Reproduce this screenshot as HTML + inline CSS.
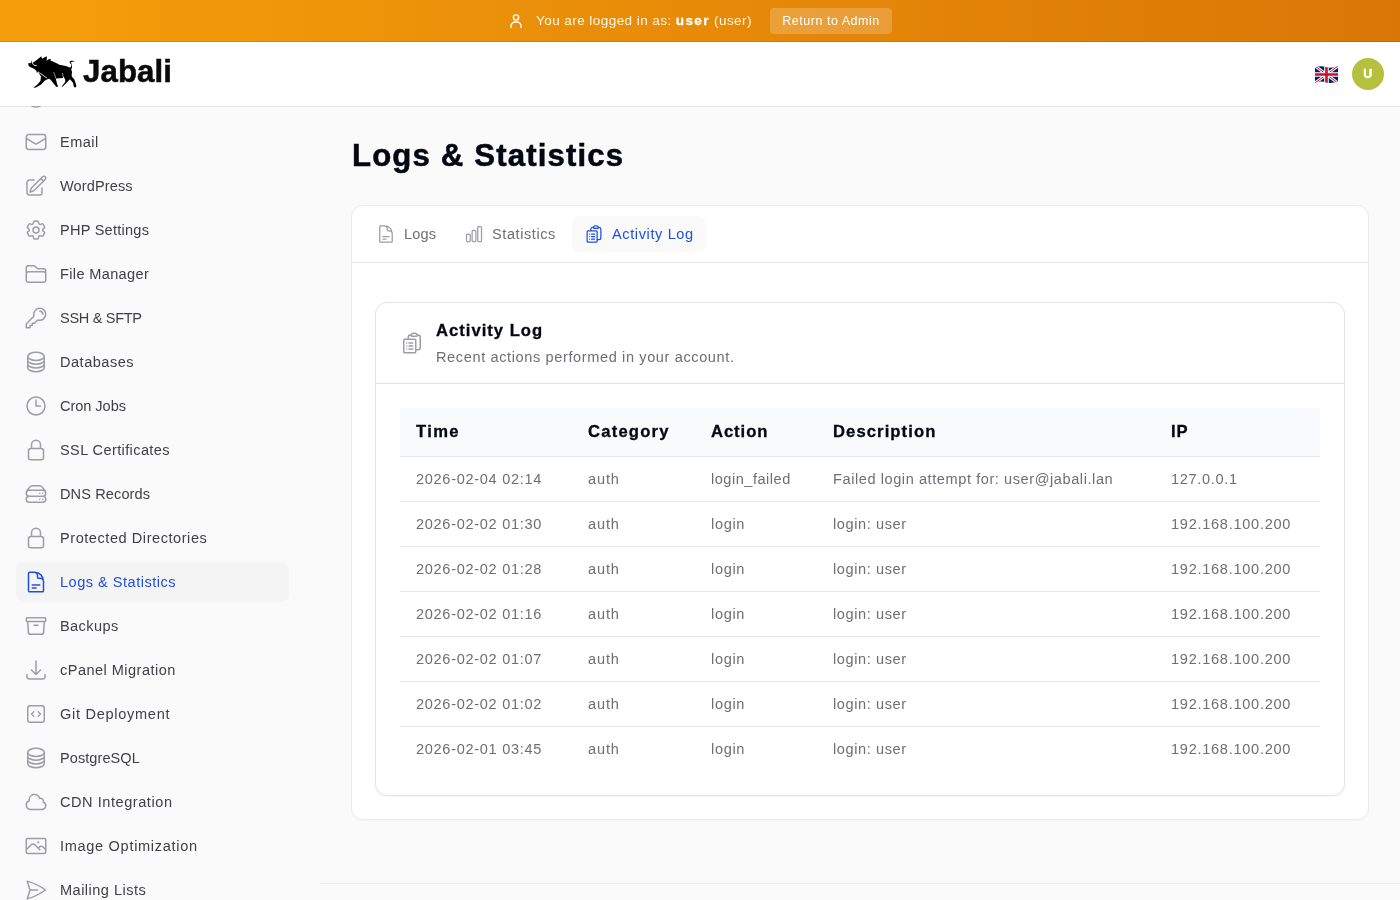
<!DOCTYPE html>
<html><head><meta charset="utf-8">
<style>
*{box-sizing:border-box;margin:0;padding:0}
html,body{width:1400px;height:900px;overflow:hidden;background:#fafafa;font-family:"Liberation Sans",sans-serif;color:#030712}
.banner{position:absolute;left:0;top:0;width:1400px;height:42px;background:linear-gradient(to right,#f59e0b,#d97706);border-bottom:1px solid rgba(120,30,0,.15)}
.banner .uicon{position:absolute;left:508px;top:12px;width:16px;height:18px}
.banner .msg{position:absolute;left:536px;top:12px;font-size:13.52px;line-height:17px;color:#fff7e6;white-space:nowrap}
.banner .msg b{color:#fff;font-weight:700}
.banner .btn{position:absolute;left:770px;top:8px;width:122px;height:26px;border-radius:4px;background:rgba(255,255,255,.2);color:#fff;font-size:12.48px;line-height:26px;text-align:center;white-space:nowrap}
.header{position:absolute;left:0;top:42px;width:1400px;height:65px;background:#fff;border-bottom:1px solid #e5e5e5;z-index:2}
.logo{position:absolute;left:24px;top:10px;width:60px;height:40px}
.brand{position:absolute;left:83px;top:10px;font-size:31.20px;line-height:40px;font-weight:700;color:#0a0a0a;letter-spacing:-0.75px;white-space:nowrap}
.flag{position:absolute;left:1315px;top:23.5px;width:23px;height:17px}
.avatar{position:absolute;left:1352px;top:16px;width:32px;height:32px;border-radius:50%;background:#b6c03f;color:#fff;font-size:12.48px;font-weight:700;line-height:32px;text-align:center}
.sidebar{position:absolute;left:0;top:106px;width:320px;height:794px;overflow:hidden;z-index:3}
.nav{position:absolute;left:16px;top:-28px;width:273px}
.item{position:relative;height:40px;margin-bottom:4px;border-radius:8px}
.item svg{position:absolute;left:8px;top:8px;width:24px;height:24px;fill:none;stroke:#9d9da7;stroke-width:1.5;stroke-linecap:round;stroke-linejoin:round}
.item span{position:absolute;left:44px;top:10px;font-size:14.56px;line-height:20px;color:#3f3f46;white-space:nowrap}
.item.active{background:#f4f4f5}
.item.active svg{stroke:#1f4fe0}
.item.active span{color:#1f4fe0}
.main{position:absolute;left:320px;top:107px;width:1080px;height:793px}
h1{position:absolute;left:32px;top:31px;font-size:31.20px;line-height:36px;font-weight:700;letter-spacing:-0.75px;color:#030712;white-space:nowrap}
.card{position:absolute;left:31px;top:98px;width:1018px;height:615px;background:#fff;border:1px solid #ececec;border-radius:12px;box-shadow:0 1px 2px rgba(0,0,0,.04)}
.tabs{position:absolute;left:0;top:0;width:1016px;height:57px;border-bottom:1px solid #e4e4e7}
.tab{position:absolute;top:10px;height:36px;border-radius:8px}
.tab svg{position:absolute;left:12px;top:8px;width:20px;height:20px;fill:none;stroke:#9d9da7;stroke-width:1.5;stroke-linecap:round;stroke-linejoin:round}
.tab span{position:absolute;left:40px;top:8px;font-size:14.56px;line-height:20px;color:#6e6e78;white-space:nowrap}
.tab.active{background:#fafafa}
.tab.active svg{stroke:#1f4fe0}
.tab.active span{color:#1f4fe0}
.inner{position:absolute;left:23px;top:96px;width:970px;height:494px;background:#fff;border:1px solid #e4e4e7;border-radius:12px;box-shadow:0 1px 2px rgba(0,0,0,.05)}
.ihead{position:absolute;left:0;top:0;width:968px;height:81px;border-bottom:1px solid #e4e4e7}
.ihead svg{position:absolute;left:24px;top:28px;width:24px;height:24px;fill:none;stroke:#9d9da7;stroke-width:1.5;stroke-linecap:round;stroke-linejoin:round}
.ihead h3{position:absolute;left:60px;top:16px;font-size:16.64px;line-height:24px;font-weight:700;color:#030712;white-space:nowrap}
.ihead p{position:absolute;left:60px;top:44px;font-size:14.56px;line-height:20px;color:#6e6e78;white-space:nowrap}
table{position:absolute;left:24px;top:105px;width:920px;border-collapse:collapse;table-layout:fixed}
th{height:48px;background:#f9fafb;border-bottom:1px solid #e5e7eb;text-align:left;padding:0 16px;font-size:16.64px;font-weight:700;color:#030712;white-space:nowrap}
td{height:45px;border-bottom:1px solid #e5e7eb;padding:0 16px;font-size:14.56px;color:#6e6e78;white-space:nowrap}
tr:last-child td{border-bottom:0}
.footline{position:absolute;left:0;top:776px;width:1080px;height:1px;background:#ececec}
h1{-webkit-text-stroke:0.5px #030712}
.brand{-webkit-text-stroke:0.5px #0a0a0a}
th,.ihead h3{-webkit-text-stroke:0.3px #030712}
.avatar{-webkit-text-stroke:0.4px #fff}
.banner .msg b{-webkit-text-stroke:0.3px #fff}
body *{-webkit-font-smoothing:antialiased}
.main,.sidebar,.banner,.header{will-change:transform}
</style></head><body>
<div class="banner">
 <svg class="uicon" viewBox="0 0 16 18" fill="none" stroke="#fff" stroke-width="1.4" stroke-linecap="round"><circle cx="8" cy="5.5" r="2.6"></circle><path d="M3 15.5v-1.3a4.2 4.2 0 0 1 4.2-4.2h1.6a4.2 4.2 0 0 1 4.2 4.2v1.3"></path></svg>
 <div class="msg" style="letter-spacing: 0.436px;">You are logged in as: <b style="letter-spacing: 1.348px;">user</b> (user)</div>
 <div class="btn" style="letter-spacing: 0.55px;">Return to Admin</div>
</div>
<div class="header">
 <svg class="logo" viewBox="24 52 60 40"><path fill="#000" d="M28.2,63.2 L31,63 L31.2,60 L32,63 L33.2,62.4 L36,60.5 L39.2,58 L41.2,56.2 L42,58.8 L43.2,58 L46.8,56.2 L46.8,59.6 L46.4,61 L48.4,59.2 L51.2,59.2 L50.4,60.4 L52.8,61.6 L57.2,63.6 L59.2,64.8 L66,66 L69.6,67.6 L70.8,67.2 L71.6,64.8 L70,63.2 L69.6,61.6 L72,60.4 L74.8,61.4 L72,61.8 L70.8,62.6 L72,64.8 L72,67.6 L71.2,69.6 L72,72 L71.6,75.2 L72,76.8 L74.4,79.6 L76,84.4 L76.4,86.4 L75.2,87.6 L73.9,86.9 L73.1,83 L71,80.6 L70,79.2 L68,81.2 L64.8,84.4 L62,87.2 L61.6,87.4 L62.4,85.6 L65.2,82 L65.2,79.6 L63.6,76.8 L62.8,78 L56,78.4 L56,79.6 L57.2,84.4 L58,86 L57.2,87.2 L56,86.4 L52.8,82.4 L50.4,79.6 L48.4,78.8 L44.6,80.8 L41.2,84.4 L36,87.6 L33.2,87.8 L37.2,84.8 L40.4,81 L41,76.4 L38,72 L36.8,72.8 L36.4,70.8 L34,68.8 L30,67 L28.5,65.5 Z"></path><g fill="none" stroke="#fff" stroke-linecap="round"><path d="M32.4,62.9 Q33.2,66.3 36.4,65.5" stroke-width="0.9"></path><path d="M38.2,72 L46.6,77.8" stroke-width="0.8"></path><path d="M53.8,72.6 Q55.2,75 55.6,78" stroke-width="0.55"></path><path d="M62.5,73.4 Q63,76 63.4,77.6" stroke-width="0.55"></path></g></svg>
 <div class="brand" style="letter-spacing: 0.123px;">Jabali</div>
 <svg class="flag" viewBox="0 0 23 17"><defs><clipPath id="fc"><path d="M0,1.4 C4,-0.4 8,0 11.5,1.2 C15,2.3 19,1.6 23,0.3 L23,15.6 C19,16.9 15,17.5 11.5,16.4 C8,15.4 4,14.9 0,16.7 Z"></path></clipPath></defs><g clip-path="url(#fc)"><rect x="-1" y="-1" width="25" height="19" fill="#012169"></rect><path d="M0,0 L23,17 M23,0 L0,17" stroke="#fff" stroke-width="3"></path><path d="M0,0 L23,17 M23,0 L0,17" stroke="#C8102E" stroke-width="1"></path><path d="M11.5,-1 V18 M-1,8.5 H24" stroke="#fff" stroke-width="4.6"></path><path d="M11.5,-1 V18 M-1,8.5 H24" stroke="#C8102E" stroke-width="2.6"></path></g></svg>
 <div class="avatar" style="letter-spacing: 0.72px;">U</div>
</div>
<div class="sidebar">
 <div class="nav">
  <div class="item"><svg viewBox="0 0 24 24"><path d="M12 21a9 9 0 1 0 0-18 9 9 0 0 0 0 18Z"></path></svg><span style="letter-spacing: 0.595px;">Domains</span></div>
  <div class="item"><svg viewBox="0 0 24 24"><path d="M21.75 6.75v10.5a2.25 2.25 0 0 1-2.25 2.25h-15a2.25 2.25 0 0 1-2.25-2.25V6.75m19.5 0A2.25 2.25 0 0 0 19.5 4.5h-15a2.25 2.25 0 0 0-2.25 2.25m19.5 0v.243a2.25 2.25 0 0 1-1.07 1.916l-7.5 4.615a2.25 2.25 0 0 1-2.36 0L3.32 8.91a2.25 2.25 0 0 1-1.07-1.916V6.75"></path></svg><span style="letter-spacing: 0.486px;">Email</span></div>
  <div class="item"><svg viewBox="0 0 24 24"><path d="m16.862 4.487 1.687-1.688a1.875 1.875 0 1 1 2.652 2.652L10.582 16.07a4.5 4.5 0 0 1-1.897 1.13L6 18l.8-2.685a4.5 4.5 0 0 1 1.13-1.897l8.932-8.931Zm0 0L19.5 7.125M18 14v4.75A2.25 2.25 0 0 1 15.75 21H5.25A2.25 2.25 0 0 1 3 18.75V8.25A2.25 2.25 0 0 1 5.25 6H10"></path></svg><span style="letter-spacing: 0.121px;">WordPress</span></div>
  <div class="item"><svg viewBox="0 0 24 24"><path d="M9.594 3.94c.09-.542.56-.94 1.11-.94h2.593c.55 0 1.02.398 1.11.94l.213 1.281c.063.374.313.686.645.87.074.04.147.083.22.127.325.196.72.257 1.075.124l1.217-.456a1.125 1.125 0 0 1 1.37.49l1.296 2.247a1.125 1.125 0 0 1-.26 1.431l-1.003.827c-.293.241-.438.613-.43.992a7.723 7.723 0 0 1 0 .255c-.008.378.137.75.43.991l1.004.827c.424.35.534.955.26 1.43l-1.298 2.247a1.125 1.125 0 0 1-1.369.491l-1.217-.456c-.355-.133-.75-.072-1.076.124a6.47 6.47 0 0 1-.22.128c-.331.183-.581.495-.644.869l-.213 1.281c-.09.543-.56.94-1.11.94h-2.594c-.55 0-1.019-.398-1.11-.94l-.213-1.281c-.062-.374-.312-.686-.644-.87a6.52 6.52 0 0 1-.22-.127c-.325-.196-.72-.257-1.076-.124l-1.217.456a1.125 1.125 0 0 1-1.369-.49l-1.297-2.247a1.125 1.125 0 0 1 .26-1.431l1.004-.827c.292-.24.437-.613.43-.991a6.932 6.932 0 0 1 0-.255c.007-.38-.138-.751-.43-.992l-1.004-.827a1.125 1.125 0 0 1-.26-1.43l1.297-2.247a1.125 1.125 0 0 1 1.37-.491l1.216.456c.356.133.751.072 1.076-.124.072-.044.146-.086.22-.128.332-.183.582-.495.644-.869l.214-1.28Z M15 12a3 3 0 1 1-6 0 3 3 0 0 1 6 0Z"></path></svg><span style="letter-spacing: 0.246px;">PHP Settings</span></div>
  <div class="item"><svg viewBox="0 0 24 24"><path d="M2.25 12.75V12A2.25 2.25 0 0 1 4.5 9.75h15A2.25 2.25 0 0 1 21.75 12v.75m-8.69-6.44-2.12-2.12a1.5 1.5 0 0 0-1.061-.44H4.5A2.25 2.25 0 0 0 2.25 6v12a2.25 2.25 0 0 0 2.25 2.25h15A2.25 2.25 0 0 0 21.75 18V9a2.25 2.25 0 0 0-2.25-2.25h-5.379a1.5 1.5 0 0 1-1.06-.44Z"></path></svg><span style="letter-spacing: 0.355px;">File Manager</span></div>
  <div class="item"><svg viewBox="0 0 24 24"><path d="M15.75 5.25a3 3 0 0 1 3 3m3 0a6 6 0 0 1-7.029 5.912c-.563-.097-1.159.026-1.563.43L10.5 17.25H8.25v2.25H6v2.25H2.25v-2.818c0-.597.237-1.17.659-1.591l6.499-6.499c.404-.404.527-1 .43-1.563A6 6 0 1 1 21.75 8.25Z"></path></svg><span style="letter-spacing: -0.313px;">SSH &amp; SFTP</span></div>
  <div class="item"><svg viewBox="0 0 24 24"><path d="M20.25 6.375c0 2.278-3.694 4.125-8.25 4.125S3.75 8.653 3.75 6.375m16.5 0c0-2.278-3.694-4.125-8.25-4.125S3.75 4.097 3.75 6.375m16.5 0v11.25c0 2.278-3.694 4.125-8.25 4.125s-8.25-1.847-8.25-4.125V6.375m16.5 0v3.75m-16.5-3.75v3.75m16.5 0v3.75C20.25 16.153 16.556 18 12 18s-8.25-1.847-8.25-4.125v-3.75m16.5 0c0 2.278-3.694 4.125-8.25 4.125s-8.25-1.847-8.25-4.125"></path></svg><span style="letter-spacing: 0.499px;">Databases</span></div>
  <div class="item"><svg viewBox="0 0 24 24"><path d="M12 6v6h4.5m4.5 0a9 9 0 1 1-18 0 9 9 0 0 1 18 0Z"></path></svg><span style="letter-spacing: -0.041px;">Cron Jobs</span></div>
  <div class="item"><svg viewBox="0 0 24 24"><path d="M16.5 10.5V6.75a4.5 4.5 0 1 0-9 0v3.75m-.75 11.25h10.5a2.25 2.25 0 0 0 2.25-2.25v-6.75a2.25 2.25 0 0 0-2.25-2.25H6.75a2.25 2.25 0 0 0-2.25 2.25v6.75a2.25 2.25 0 0 0 2.25 2.25Z"></path></svg><span style="letter-spacing: 0.386px;">SSL Certificates</span></div>
  <div class="item"><svg viewBox="0 0 24 24"><path d="M5.25 14.25h13.5m-13.5 0a3 3 0 0 1-3-3m3 3a3 3 0 1 0 0 6h13.5a3 3 0 1 0 0-6m-16.5-3a3 3 0 0 1 3-3h13.5a3 3 0 0 1 3 3m-19.5 0a4.5 4.5 0 0 1 .9-2.7L5.737 5.1a3.375 3.375 0 0 1 2.7-1.35h7.126c1.062 0 2.062.5 2.7 1.35l2.587 3.45a4.5 4.5 0 0 1 .9 2.7m0 0a3 3 0 0 1-3 3m0 3h.008v.008h-.008v-.008Zm0-6h.008v.008h-.008v-.008Zm-3 6h.008v.008h-.008v-.008Zm0-6h.008v.008h-.008v-.008Z"></path></svg><span style="letter-spacing: 0.112px;">DNS Records</span></div>
  <div class="item"><svg viewBox="0 0 24 24"><path d="M16.5 10.5V6.75a4.5 4.5 0 1 0-9 0v3.75m-.75 11.25h10.5a2.25 2.25 0 0 0 2.25-2.25v-6.75a2.25 2.25 0 0 0-2.25-2.25H6.75a2.25 2.25 0 0 0-2.25 2.25v6.75a2.25 2.25 0 0 0 2.25 2.25Z"></path></svg><span style="letter-spacing: 0.549px;">Protected Directories</span></div>
  <div class="item active"><svg viewBox="0 0 24 24"><path d="M19.5 14.25v-2.625a3.375 3.375 0 0 0-3.375-3.375h-1.5A1.125 1.125 0 0 1 13.5 7.125v-1.5a3.375 3.375 0 0 0-3.375-3.375H8.25m0 12.75h7.5m-7.5 3H12M10.5 2.25H5.625c-.621 0-1.125.504-1.125 1.125v17.25c0 .621.504 1.125 1.125 1.125h12.75c.621 0 1.125-.504 1.125-1.125V11.25a9 9 0 0 0-9-9Z"></path></svg><span style="letter-spacing: 0.498px;">Logs &amp; Statistics</span></div>
  <div class="item"><svg viewBox="0 0 24 24"><path d="m20.25 7.5-.625 10.632a2.25 2.25 0 0 1-2.247 2.118H6.622a2.25 2.25 0 0 1-2.247-2.118L3.75 7.5M10 11.25h4M3.375 7.5h17.25c.621 0 1.125-.504 1.125-1.125v-1.5c0-.621-.504-1.125-1.125-1.125H3.375c-.621 0-1.125.504-1.125 1.125v1.5c0 .621.504 1.125 1.125 1.125Z"></path></svg><span style="letter-spacing: 0.395px;">Backups</span></div>
  <div class="item"><svg viewBox="0 0 24 24"><path d="M3 16.5v2.25A2.25 2.25 0 0 0 5.25 21h13.5A2.25 2.25 0 0 0 21 18.75V16.5M16.5 12 12 16.5m0 0L7.5 12m4.5 4.5V3"></path></svg><span style="letter-spacing: 0.466px;">cPanel Migration</span></div>
  <div class="item"><svg viewBox="0 0 24 24"><path d="M14.25 9.75 16.5 12l-2.25 2.25m-4.5 0L7.5 12l2.25-2.25M6 20.25h12A2.25 2.25 0 0 0 20.25 18V6A2.25 2.25 0 0 0 18 3.75H6A2.25 2.25 0 0 0 3.75 6v12A2.25 2.25 0 0 0 6 20.25Z"></path></svg><span style="letter-spacing: 0.711px;">Git Deployment</span></div>
  <div class="item"><svg viewBox="0 0 24 24"><path d="M20.25 6.375c0 2.278-3.694 4.125-8.25 4.125S3.75 8.653 3.75 6.375m16.5 0c0-2.278-3.694-4.125-8.25-4.125S3.75 4.097 3.75 6.375m16.5 0v11.25c0 2.278-3.694 4.125-8.25 4.125s-8.25-1.847-8.25-4.125V6.375m16.5 0v3.75m-16.5-3.75v3.75m16.5 0v3.75C20.25 16.153 16.556 18 12 18s-8.25-1.847-8.25-4.125v-3.75m16.5 0c0 2.278-3.694 4.125-8.25 4.125s-8.25-1.847-8.25-4.125"></path></svg><span style="letter-spacing: 0.063px;">PostgreSQL</span></div>
  <div class="item"><svg viewBox="0 0 24 24"><path d="M2.25 15a4.5 4.5 0 0 0 4.5 4.5H18a3.75 3.75 0 0 0 1.332-7.257 3 3 0 0 0-3.758-3.848 5.25 5.25 0 0 0-10.233 2.33A4.502 4.502 0 0 0 2.25 15Z"></path></svg><span style="letter-spacing: 0.548px;">CDN Integration</span></div>
  <div class="item"><svg viewBox="0 0 24 24"><path d="m2.25 15.75 5.159-5.159a2.25 2.25 0 0 1 3.182 0l5.159 5.159m-1.5-1.5 1.409-1.409a2.25 2.25 0 0 1 3.182 0l2.909 2.909m-18 3.75h16.5a1.5 1.5 0 0 0 1.5-1.5V6a1.5 1.5 0 0 0-1.5-1.5H3.75A1.5 1.5 0 0 0 2.25 6v12a1.5 1.5 0 0 0 1.5 1.5Zm10.5-11.25h.008v.008h-.008V8.25Zm.375 0a.375.375 0 1 1-.75 0 .375.375 0 0 1 .75 0Z"></path></svg><span style="letter-spacing: 0.69px;">Image Optimization</span></div>
  <div class="item"><svg viewBox="0 0 24 24"><path d="M6 12 3.269 3.125A59.769 59.769 0 0 1 21.485 12 59.768 59.768 0 0 1 3.27 20.875L5.999 12Zm0 0h7.5"></path></svg><span style="letter-spacing: 0.476px;">Mailing Lists</span></div>
 </div>
</div>
<div class="main">
 <h1 style="letter-spacing: 1.126px;">Logs &amp; Statistics</h1>

 <div class="card">
  <div class="tabs">
   <div class="tab" style="left:12px;width:88px"><svg viewBox="0 0 24 24"><path d="M19.5 14.25v-2.625a3.375 3.375 0 0 0-3.375-3.375h-1.5A1.125 1.125 0 0 1 13.5 7.125v-1.5a3.375 3.375 0 0 0-3.375-3.375H8.25m0 12.75h7.5m-7.5 3H12M10.5 2.25H5.625c-.621 0-1.125.504-1.125 1.125v17.25c0 .621.504 1.125 1.125 1.125h12.75c.621 0 1.125-.504 1.125-1.125V11.25a9 9 0 0 0-9-9Z"></path></svg><span style="letter-spacing: 0.181px;">Logs</span></div>
   <div class="tab" style="left:100px;width:120px"><svg viewBox="0 0 24 24"><path d="M3 13.125C3 12.504 3.504 12 4.125 12h2.25c.621 0 1.125.504 1.125 1.125v6.75C7.5 20.496 6.996 21 6.375 21h-2.25A1.125 1.125 0 0 1 3 19.875v-6.75ZM9.75 8.625c0-.621.504-1.125 1.125-1.125h2.25c.621 0 1.125.504 1.125 1.125v11.25c0 .621-.504 1.125-1.125 1.125h-2.25a1.125 1.125 0 0 1-1.125-1.125V8.625ZM16.5 4.125c0-.621.504-1.125 1.125-1.125h2.25C20.496 3 21 3.504 21 4.125v15.75c0 .621-.504 1.125-1.125 1.125h-2.25a1.125 1.125 0 0 1-1.125-1.125V4.125Z"></path></svg><span style="letter-spacing: 0.574px;">Statistics</span></div>
   <div class="tab active" style="left:220px;width:134px"><svg viewBox="0 0 24 24"><path d="M9 12h3.75M9 15h3.75M9 18h3.75m3 .75H18a2.25 2.25 0 0 0 2.25-2.25V6.108c0-1.135-.845-2.098-1.976-2.192a48.424 48.424 0 0 0-1.123-.08m-5.801 0c-.065.21-.1.433-.1.664 0 .414.336.75.75.75h4.5a.75.75 0 0 0 .75-.75 2.25 2.25 0 0 0-.1-.664m-5.8 0A2.251 2.251 0 0 1 13.5 2.25H15c1.012 0 1.867.668 2.15 1.586m-5.8 0c-.376.023-.75.05-1.124.08C9.095 4.01 8.25 4.973 8.25 6.108V8.25m0 0H4.875c-.621 0-1.125.504-1.125 1.125v11.25c0 .621.504 1.125 1.125 1.125h9.75c.621 0 1.125-.504 1.125-1.125V9.375c0-.621-.504-1.125-1.125-1.125H8.25ZM6.75 12h.008v.008H6.75V12Zm0 3h.008v.008H6.75V15Zm0 3h.008v.008H6.75V18Z"></path></svg><span style="letter-spacing: 0.613px;">Activity Log</span></div>
  </div>
  <div class="inner">
   <div class="ihead"><svg viewBox="0 0 24 24"><path d="M9 12h3.75M9 15h3.75M9 18h3.75m3 .75H18a2.25 2.25 0 0 0 2.25-2.25V6.108c0-1.135-.845-2.098-1.976-2.192a48.424 48.424 0 0 0-1.123-.08m-5.801 0c-.065.21-.1.433-.1.664 0 .414.336.75.75.75h4.5a.75.75 0 0 0 .75-.75 2.25 2.25 0 0 0-.1-.664m-5.8 0A2.251 2.251 0 0 1 13.5 2.25H15c1.012 0 1.867.668 2.15 1.586m-5.8 0c-.376.023-.75.05-1.124.08C9.095 4.01 8.25 4.973 8.25 6.108V8.25m0 0H4.875c-.621 0-1.125.504-1.125 1.125v11.25c0 .621.504 1.125 1.125 1.125h9.75c.621 0 1.125-.504 1.125-1.125V9.375c0-.621-.504-1.125-1.125-1.125H8.25ZM6.75 12h.008v.008H6.75V12Zm0 3h.008v.008H6.75V15Zm0 3h.008v.008H6.75V18Z"></path></svg><h3 style="letter-spacing: 0.998px;">Activity Log</h3><p style="letter-spacing: 0.617px;">Recent actions performed in your account.</p></div>
   <table>
   <colgroup><col style="width:172px"><col style="width:123px"><col style="width:122px"><col style="width:338px"><col style="width:165px"></colgroup>
   <tbody><tr><th style="letter-spacing: 1.342px;">Time</th><th style="letter-spacing: 1.21px;">Category</th><th style="letter-spacing: 0.935px;">Action</th><th style="letter-spacing: 1.084px;">Description</th><th style="letter-spacing: 0.975px;">IP</th></tr>
   <tr><td style="letter-spacing: 0.7px;">2026-02-04 02:14</td><td style="letter-spacing: 0.87px;">auth</td><td style="letter-spacing: 0.518px;">login_failed</td><td style="letter-spacing: 0.578px;">Failed login attempt for: user@jabali.lan</td><td style="letter-spacing: 0.674px;">127.0.0.1</td></tr>
   <tr><td style="letter-spacing: 0.7px;">2026-02-02 01:30</td><td style="letter-spacing: 0.87px;">auth</td><td style="letter-spacing: 0.665px;">login</td><td style="letter-spacing: 0.603px;">login: user</td><td style="letter-spacing: 0.728px;">192.168.100.200</td></tr>
   <tr><td style="letter-spacing: 0.7px;">2026-02-02 01:28</td><td style="letter-spacing: 0.87px;">auth</td><td style="letter-spacing: 0.665px;">login</td><td style="letter-spacing: 0.603px;">login: user</td><td style="letter-spacing: 0.728px;">192.168.100.200</td></tr>
   <tr><td style="letter-spacing: 0.7px;">2026-02-02 01:16</td><td style="letter-spacing: 0.87px;">auth</td><td style="letter-spacing: 0.665px;">login</td><td style="letter-spacing: 0.603px;">login: user</td><td style="letter-spacing: 0.728px;">192.168.100.200</td></tr>
   <tr><td style="letter-spacing: 0.7px;">2026-02-02 01:07</td><td style="letter-spacing: 0.87px;">auth</td><td style="letter-spacing: 0.665px;">login</td><td style="letter-spacing: 0.603px;">login: user</td><td style="letter-spacing: 0.728px;">192.168.100.200</td></tr>
   <tr><td style="letter-spacing: 0.7px;">2026-02-02 01:02</td><td style="letter-spacing: 0.87px;">auth</td><td style="letter-spacing: 0.665px;">login</td><td style="letter-spacing: 0.603px;">login: user</td><td style="letter-spacing: 0.728px;">192.168.100.200</td></tr>
   <tr><td style="letter-spacing: 0.7px;">2026-02-01 03:45</td><td style="letter-spacing: 0.87px;">auth</td><td style="letter-spacing: 0.665px;">login</td><td style="letter-spacing: 0.603px;">login: user</td><td style="letter-spacing: 0.728px;">192.168.100.200</td></tr>
   </tbody></table>
  </div>
 </div>
 <div class="footline"></div>
</div>

</body></html>
